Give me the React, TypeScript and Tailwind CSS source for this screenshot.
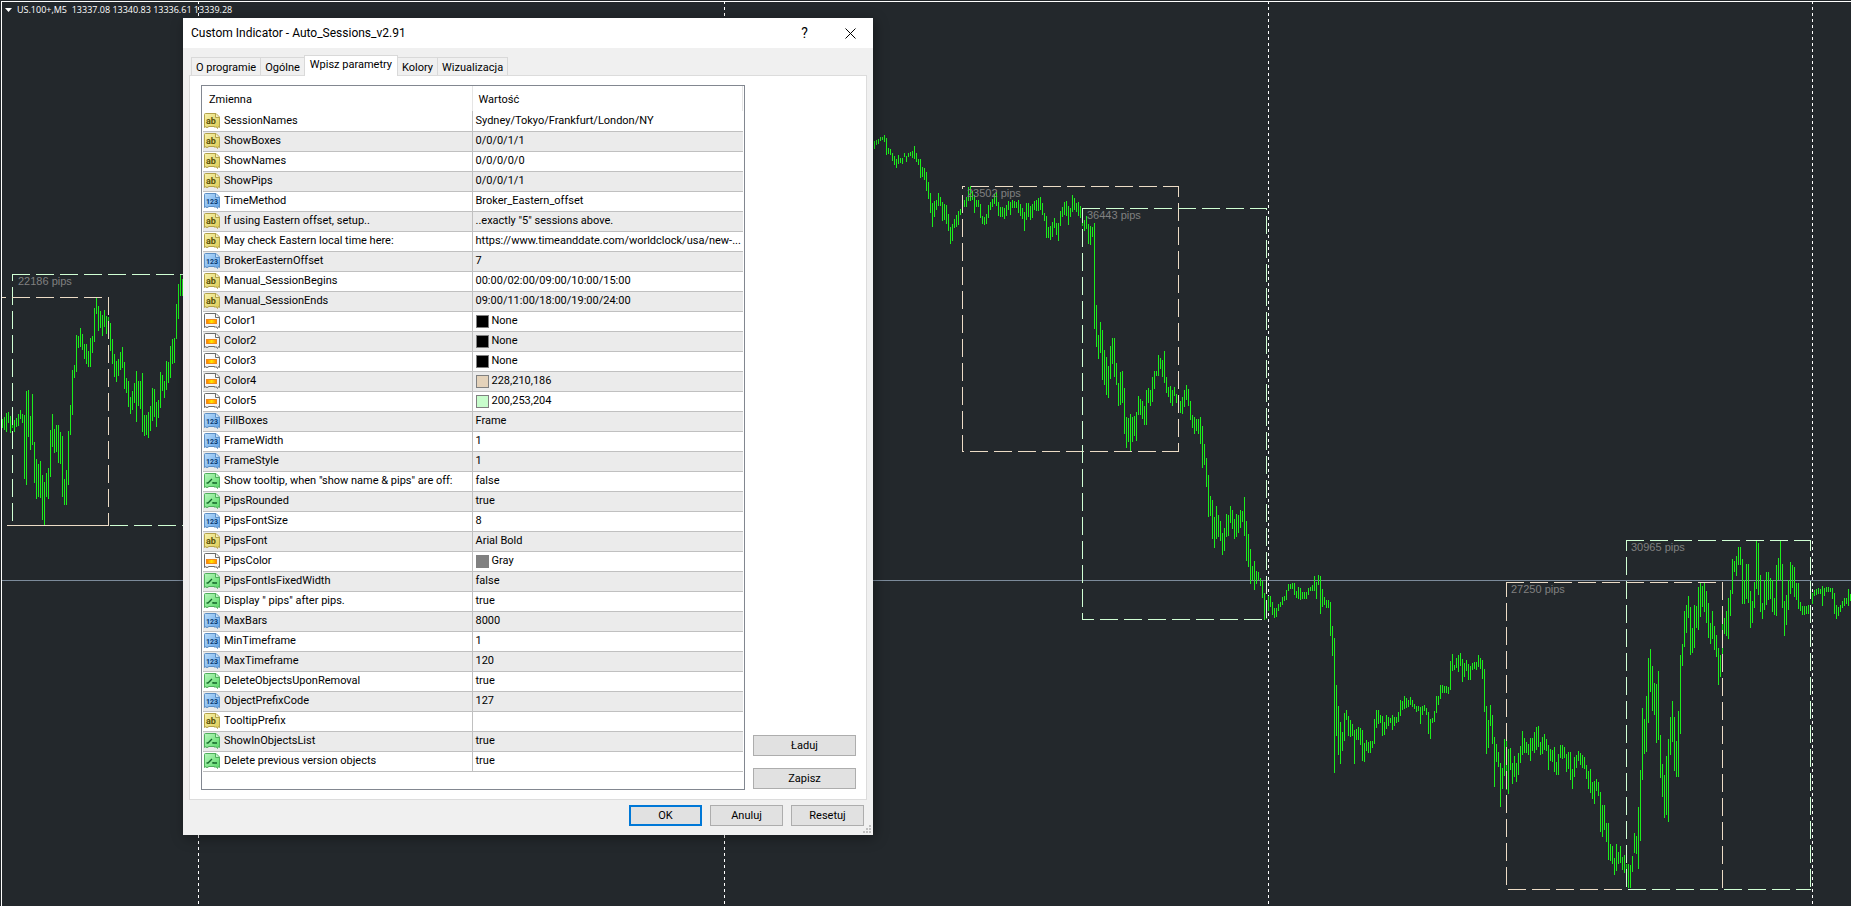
import { useState } from "react";

type IconKind = "text" | "number" | "color" | "bool";

const params: { kind: IconKind; name: string; value: string; swatch?: string }[] = [
  { kind: "text", name: "SessionNames", value: "Sydney/Tokyo/Frankfurt/London/NY" },
  { kind: "text", name: "ShowBoxes", value: "0/0/0/1/1" },
  { kind: "text", name: "ShowNames", value: "0/0/0/0/0" },
  { kind: "text", name: "ShowPips", value: "0/0/0/1/1" },
  { kind: "number", name: "TimeMethod", value: "Broker_Eastern_offset" },
  { kind: "text", name: "If using Eastern offset, setup..", value: '..exactly "5" sessions above.' },
  { kind: "text", name: "May check Eastern local time here:", value: "https://www.timeanddate.com/worldclock/usa/new-..." },
  { kind: "number", name: "BrokerEasternOffset", value: "7" },
  { kind: "text", name: "Manual_SessionBegins", value: "00:00/02:00/09:00/10:00/15:00" },
  { kind: "text", name: "Manual_SessionEnds", value: "09:00/11:00/18:00/19:00/24:00" },
  { kind: "color", name: "Color1", value: "None", swatch: "bg-black" },
  { kind: "color", name: "Color2", value: "None", swatch: "bg-black" },
  { kind: "color", name: "Color3", value: "None", swatch: "bg-black" },
  { kind: "color", name: "Color4", value: "228,210,186", swatch: "bg-[#e4d2ba]" },
  { kind: "color", name: "Color5", value: "200,253,204", swatch: "bg-[#c8fdcc]" },
  { kind: "number", name: "FillBoxes", value: "Frame" },
  { kind: "number", name: "FrameWidth", value: "1" },
  { kind: "number", name: "FrameStyle", value: "1" },
  { kind: "bool", name: 'Show tooltip, when "show name & pips" are off:', value: "false" },
  { kind: "bool", name: "PipsRounded", value: "true" },
  { kind: "number", name: "PipsFontSize", value: "8" },
  { kind: "text", name: "PipsFont", value: "Arial Bold" },
  { kind: "color", name: "PipsColor", value: "Gray", swatch: "bg-[#808080]" },
  { kind: "bool", name: "PipsFontIsFixedWidth", value: "false" },
  { kind: "bool", name: 'Display " pips" after pips.', value: "true" },
  { kind: "number", name: "MaxBars", value: "8000" },
  { kind: "number", name: "MinTimeframe", value: "1" },
  { kind: "number", name: "MaxTimeframe", value: "120" },
  { kind: "bool", name: "DeleteObjectsUponRemoval", value: "true" },
  { kind: "number", name: "ObjectPrefixCode", value: "127" },
  { kind: "text", name: "TooltipPrefix", value: "" },
  { kind: "bool", name: "ShowInObjectsList", value: "true" },
  { kind: "bool", name: "Delete previous version objects", value: "true" },
];

const tabs = ["O programie", "Ogólne", "Wpisz parametry", "Kolory", "Wizualizacja"];

// high-low of every bar, one bar each 2px
const series = [
  {
    start: 2,
    bars: "419-428 417-430 413-432 412-423 416-433 420-428 420-432 418-427 414-426 410-419 414-423 415-479 391-485 390-437 416-450 394-445 442-483 459-499 464-497 461-498 475-520 482-525 473-497 468-499 430-477 414-447 429-453 425-452 425-463 432-464 436-497 479-505 470-505 431-485 405-435 370-415 365-378 335-372 336-348 328-347 334-350 344-359 344-364 351-367 338-367 336-353 308-342 298-314 306-331 311-328 315-336 310-327 316-334 317-338 323-351 339-364 354-377 361-382 359-376 352-370 347-368 362-389 378-393 381-407 397-414 391-410 383-403 371-422 381-406 381-409 373-432 415-436 415-435 412-438 406-431 388-421 389-417 402-427 400-418 372-408 375-391 381-398 361-390 362-383 346-378 339-364 338-363 304-339 284-319 274-296 279-296",
  },
  {
    start: 874,
    bars: "141-149 140-145 139-144 137-141 137-140 135-142 138-155 148-154 149-155 153-161 156-165 159-168 155-164 158-163 158-164 153-157 156-162 153-157 152-156 151-158 146-159 153-162 159-165 159-178 167-177 168-180 172-191 182-199 193-213 203-227 201-217 200-210 193-206 197-206 202-221 204-220 205-224 214-231 227-244 224-241 219-228 215-227 211-225 209-215 209-213 200-207 197-207 187-201 186-201 191-200 195-213 200-207 200-207 204-218 216-224 217-225 214-224 205-218 202-210 199-207 194-204 192-206 202-216 207-217 207-217 208-219 205-216 201-210 202-215 200-208 201-208 202-208 200-213 204-216 208-219 212-231 203-220 203-217 206-220 204-218 201-210 200-211 198-211 197-210 203-215 213-221 216-238 227-238 226-240 222-237 218-228 223-235 223-241 211-226 207-217 202-215 201-216 206-225 208-217 195-212 198-210 203-212 202-216 206-218 208-226 220-231 216-229 224-244 226-245 227-237 223-329 305-347 335-359 322-353 330-380 350-385 357-395 366-398 346-379 338-364 338-377 363-385 383-406 372-405 371-403 388-434 417-448 418-442 414-451 417-442 416-436 412-441 396-415 399-415 401-419 406-425 390-425 388-403 390-406 377-402 371-389 371-376 355-376 358-369 360-377 351-383 377-393 387-397 386-403 390-406 387-396 394-403 396-406",
  },
  {
    start: 1180,
    bars: "401-413 397-414 390-407 385-400 389-406 401-420 415-428 417-434 419-431 419-434 417-444 426-468 444-465 458-487 475-517 496-516 500-539 517-548 506-539 515-537 521-541 533-555 528-551 514-537 515-536 506-523 510-529 519-539 514-537 515-533 510-528 511-522 497-536 521-561 534-567 549-584 566-580 561-590 571-584 572-580 578-586 581-598 593-620 600-619 596-611 596-607 602-615 608-618 608-617 604-611 602-607 597-605 596-601 590-600 584-591 584-589 583-589 583-595 591-598 587-599 588-600 592-599 592-599 592-599 588-595 587-591 585-591 576-591 582-599 575-585 576-614 589-607 597-605 600-608 600-608 602-636 626-656",
  },
  {
    start: 1334,
    bars: "638-773 685-736 706-755 722-764 732-751 713-741 710-720 716-736 720-737 724-736 730-764 729-740 727-740 728-745 730-761 743-762 740-751 742-753 741-753 741-748 719-744 710-728 710-724 715-723 716-736 722-735 715-729 717-726 718-723 715-730 717-726 717-723 712-722 700-716 701-710 696-709 698-708 700-707 697-705 700-707 704-709 706-712 706-711 707-724 706-715 705-711 708-715 712-734 719-739 718-723 711-722 696-713 696-705 685-699 685-693 686-693 686-693 687-694 661-690 654-671 665-670 658-668 655-672 653-666 659-682 663-677 660-671 664-680 666-680 663-670 662-669 662-670 655-667 658-669 660-679 669-712 706-754 720-748 705-726 715-744 737-787 744-762 752-767 763-807 768-789 739-776 741-790 749-794 748-770 763-784 756-777 763-782 753-775 746-763 731-755 738-753 742-753 744-755 738-761 738-751 732-753 727-750 726-747 742-755 737-754 734-750 739-751 745-770 749-761 750-762 747-772 762-775 754-775 745-758 745-759 747-758 754-772 752-769 752-780 769-789 757-777 755-768 751-761 753-765 755-768 757-769 765-779 771-789 769-793 782-799 781-804 779-791 782-796",
  },
  {
    start: 1600,
    bars: "792-832 805-837 805-830 823-842 823-860 844-861 846-864 858-875 844-871 852-864 846-863 857-870 855-873 864-887 864-888 865-888 856-872 833-853 836-854 807-869 770-841 708-780 719-754 696-752 658-723 649-692 666-711 683-715 684-743 671-740 735-778 764-797 775-818 756-815 739-822 717-755 701-742 717-771 741-777 711-777 655-734 644-666 611-647 605-633 596-618 607-655 628-653 605-648 606-628 587-630 583-617 586-607 583-612 591-623 603-638 623-644 611-639 626-650 635-657 648-685 655-677 624-672 618-634 611-636 598-639 590-616 559-594 561-572 556-576 547-565 547-565 559-604 580-604 564-599 564-603 591-628 601-623 582-608 541-589 543-595 575-612 603-619 580-610 572-605 572-600 578-599 580-612 598-615 565-616 558-580 541-580 564-608 601-636 595-625 580-610 562-594 565-588 567-597 583-600 583-609 602-611 606-615 606-615 606-614 605-614 606-615 593-604 590-596 589-595 588-594 589-594 586-606 588-596 587-592 587-592 588-592 588-599 593-614 605-619 607-616 605-612 601-608 598-606 598-604 589-606 594-601",
  },
];

const barsPath = series
  .map(({ start, bars }) =>
    bars
      .split(" ")
      .map((bar, i) => {
        const [high, low] = bar.split("-");
        return `M${start + i * 2 + 0.5} ${high}V${low}`;
      })
      .join("")
  )
  .join("");

const TAN = "#ecdcc6";
const MINT = "#d0ffd4";

// each side of a session frame has its own dash phase
const frameLines = [
  { d: "M12 274.5H183", color: MINT, offset: 0 },
  { d: "M12.5 274V525", color: MINT, offset: 11 },
  { d: "M110 525.5H183", color: MINT, offset: 0 },
  { d: "M2 297.5H108", color: TAN, offset: 14 },
  { d: "M108.5 297V526", color: TAN, offset: 0 },
  { d: "M962 186.5H1179", color: TAN, offset: 15 },
  { d: "M962.5 186V452", color: TAN, offset: 15 },
  { d: "M1178.5 186V452", color: TAN, offset: 7 },
  { d: "M962 451.5H1179", color: TAN, offset: 16 },
  { d: "M1082 208.5H1267", color: MINT, offset: 0 },
  { d: "M1082.5 208V619", color: MINT, offset: 3 },
  { d: "M1266.5 208V619", color: MINT, offset: 16 },
  { d: "M1082 619.5H1267", color: MINT, offset: 6 },
  { d: "M1506 582.5H1723", color: TAN, offset: 0 },
  { d: "M1506.5 582V889", color: TAN, offset: 3 },
  { d: "M1722.5 582V889", color: TAN, offset: 0 },
  { d: "M1506 889.5H1626", color: TAN, offset: 22 },
  { d: "M1626 540.5H1811", color: MINT, offset: 0 },
  { d: "M1626.5 540V889", color: MINT, offset: 7 },
  { d: "M1810.5 540V889", color: MINT, offset: 7 },
  { d: "M1626 889.5H1811", color: MINT, offset: 22 },
];

const pipLabels = [
  { x: 18, y: 285, text: "22186 pips" },
  { x: 967, y: 197, text: "23502 pips" },
  { x: 1087, y: 219, text: "36443 pips" },
  { x: 1511, y: 593, text: "27250 pips" },
  { x: 1631, y: 551, text: "30965 pips" },
];

function Chart() {
  return (
    <svg className="absolute inset-0 w-full h-full" shapeRendering="crispEdges" aria-hidden="true">
      {/* day separators */}
      <path d="M198.5 1V906M724.5 1V906M1268.5 1V906M1812.5 1V906" stroke="#fff" strokeDasharray="3 3" fill="none" />
      <path d="M2 580.5H1851" stroke="#7c8b9b" />
      <path d={barsPath} stroke="#1cee1c" fill="none" />
      <path d="M7 525.5H109" stroke={TAN} />
      {frameLines.map((line) => (
        <path key={line.d} d={line.d} stroke={line.color} strokeDasharray="18 6" strokeDashoffset={line.offset} />
      ))}
      {pipLabels.map((label) => (
        <text key={label.text} x={label.x} y={label.y} fill="#808080" className="text-[11px] font-['Liberation_Sans',sans-serif]">
          {label.text}
        </text>
      ))}
      {/* window edge */}
      <path d="M1 1.5H1851M1.5 1V906" stroke="#fff" />
    </svg>
  );
}

const iconColors = {
  text: { fill: "url(#icon-text)", edge: "#b3a24a" },
  number: { fill: "url(#icon-number)", edge: "#5d8fc4" },
  color: { fill: "url(#icon-color)", edge: "#6b6b6b" },
  bool: { fill: "url(#icon-bool)", edge: "#4fae5c" },
};

function IconDefs() {
  return (
    <svg className="absolute size-0" aria-hidden="true">
      <defs>
        <linearGradient id="icon-text" x1="0" y1="0" x2="1" y2="1">
          <stop offset="0" stopColor="#f7f2ae" />
          <stop offset="1" stopColor="#ddcb52" />
        </linearGradient>
        <linearGradient id="icon-number" x1="0" y1="0" x2="1" y2="1">
          <stop offset="0" stopColor="#b9dcfb" />
          <stop offset="1" stopColor="#62a3e6" />
        </linearGradient>
        <linearGradient id="icon-color" x1="0" y1="0" x2="1" y2="1">
          <stop offset="0" stopColor="#ffffff" />
          <stop offset="1" stopColor="#eeeeee" />
        </linearGradient>
        <linearGradient id="icon-bool" x1="0" y1="0" x2="1" y2="1">
          <stop offset="0" stopColor="#b9f7bd" />
          <stop offset="1" stopColor="#57d866" />
        </linearGradient>
        <linearGradient id="icon-bar">
          <stop offset="0" stopColor="#ff7a00" />
          <stop offset="0.5" stopColor="#ffe600" />
          <stop offset="1" stopColor="#ff8a00" />
        </linearGradient>
      </defs>
    </svg>
  );
}

function ParamIcon({ kind }: { kind: IconKind }) {
  const { fill, edge } = iconColors[kind];
  return (
    <svg width="16" height="16" viewBox="0 0 16 16" className="shrink-0" aria-hidden="true">
      <path
        d="M0.5 1.5Q0.5 0.5 1.5 0.5H12L15.5 4V14.5L14.5 13.5L13.5 15.5L12 13.5L11 14.5L10 13L9 14L8 13L7 14L6 13L5 14L4 13.5L3 15L2 13.5L0.5 14.5Z"
        fill={fill}
        stroke={edge}
      />
      <path d="M11.5 0.5V4.5H15.5" fill="#ffffff80" stroke={edge} />
      {kind === "text" && (
        <text x="2" y="11" fill="#5b5208" className="text-[9px] font-bold font-['Roboto',sans-serif]">ab</text>
      )}
      {kind === "number" && (
        <text x="2" y="11" fill="#0b3d73" className="text-[7px] font-bold font-['Roboto',sans-serif]">123</text>
      )}
      {kind === "color" && <rect x="2.5" y="6.5" width="10" height="4" fill="url(#icon-bar)" stroke="#f08a1c" />}
      {kind === "bool" && <path d="M2.5 10H4L8 6M9 9V10H13" fill="none" stroke="#14682a" strokeWidth="1.3" />}
    </svg>
  );
}

const buttonClass = "h-[21px] bg-[#e1e1e1] border border-[#adadad] text-center leading-[19px] hover:bg-[#e5f1fb] hover:border-[#0078d7]";

export default function App() {
  const [activeTab, setActiveTab] = useState("Wpisz parametry");

  return (
    <main className="relative min-h-screen overflow-hidden bg-[#23282c] font-['Roboto',sans-serif] text-[11px] text-black">
      <Chart />
      <IconDefs />

      <div className="relative flex items-center px-1 pt-px h-[18px] text-white font-['Open_Sans',sans-serif] text-[9px]">
        <svg width="9" height="6" viewBox="0 0 9 6" aria-hidden="true">
          <path d="M1 1H8L4.5 5Z" fill="#fff" />
        </svg>
        <span className="pl-1 whitespace-pre">US.100+,M5  13337.08 13340.83 13336.61 13339.28</span>
      </div>

      <section role="dialog" aria-labelledby="dialog-title" className="absolute left-[183px] top-[18px] w-[690px] bg-[#f0f0f0] shadow-[2px_3px_12px_rgba(0,0,0,0.35)]">
        <header className="flex items-center h-[30px] pl-2 bg-white text-[12px]">
          <h1 id="dialog-title" className="grow">Custom Indicator - Auto_Sessions_v2.91</h1>
          <button type="button" aria-label="Pomoc" className="w-[45px] h-full text-[14px]">?</button>
          <button type="button" aria-label="Zamknij" className="flex items-center justify-center w-[46px] h-full">
            <svg width="11" height="11" viewBox="0 0 11 11" aria-hidden="true">
              <path d="M0.5 0.5L10.5 10.5M10.5 0.5L0.5 10.5" stroke="#000" />
            </svg>
          </button>
        </header>

        <div role="tablist" className="flex items-end h-[27px] px-2">
          {tabs.map((tab) => (
            <button
              key={tab}
              type="button"
              role="tab"
              aria-selected={tab === activeTab}
              onClick={() => setActiveTab(tab)}
              className={
                tab === activeTab
                  ? "relative z-10 h-[21px] -mb-px -ml-px px-[5px] pb-0.5 bg-white border border-b-0 border-[#d9d9d9]"
                  : "h-[18px] px-1 pt-0.5 bg-[#f0f0f0] border border-b-0 border-l-0 first:border-l border-[#d9d9d9]"
              }
            >
              {tab}
            </button>
          ))}
        </div>

        <div className="flex gap-2 mx-[6px] p-[9px] pl-[11px] bg-white border border-[#dcdcdc]">
          <div className="w-[544px] px-px pb-[17px] bg-white border border-[#828790]">
            <table className="w-full table-fixed border-collapse text-left">
              <colgroup>
                <col className="w-[269px]" />
                <col />
              </colgroup>
              <thead>
                <tr className="h-[25px]">
                  <th className="pl-[6px] pt-1 font-normal border-r border-[#e5e5e5]">Zmienna</th>
                  <th className="pl-[6px] pt-1 font-normal border-r border-[#e5e5e5]">Wartość</th>
                </tr>
              </thead>
              <tbody>
                {params.map((param) => (
                  <tr key={param.name} className="h-[20px] even:bg-[#ebebeb] border-b border-[#c0c0c0]">
                    <td className="p-0 border-r border-[#c0c0c0]">
                      <div className="flex items-center gap-1 pl-px whitespace-nowrap">
                        <ParamIcon kind={param.kind} />
                        <span className="pt-px">{param.name}</span>
                      </div>
                    </td>
                    <td className="p-0">
                      <div className="flex items-center gap-[3px] pl-[3px] whitespace-nowrap">
                        {param.swatch && <span className={`size-[13px] border border-[#808080] ${param.swatch}`} />}
                        <span className="pt-px">{param.value}</span>
                      </div>
                    </td>
                  </tr>
                ))}
              </tbody>
            </table>
          </div>
          <div className="flex flex-col justify-end gap-3 w-[103px] pb-px">
            <button type="button" className={buttonClass}>Ładuj</button>
            <button type="button" className={buttonClass}>Zapisz</button>
          </div>
        </div>

        <footer className="flex justify-end gap-2 pt-[5px] pr-[9px] h-[35px]">
          <button type="button" className="w-[73px] h-[21px] bg-[#e1e1e1] border-2 border-[#0078d7] text-center leading-[17px]">OK</button>
          <button type="button" className={`w-[73px] ${buttonClass}`}>Anuluj</button>
          <button type="button" className={`w-[73px] ${buttonClass}`}>Resetuj</button>
        </footer>
        {/* resize grip */}
        <svg width="8" height="8" viewBox="0 0 8 8" className="absolute right-[2px] bottom-[2px]" aria-hidden="true">
          <path d="M6 0h2v2h-2zM3 3h2v2h-2zM6 3h2v2h-2zM0 6h2v2h-2zM3 6h2v2h-2zM6 6h2v2h-2z" fill="#bfbfbf" />
        </svg>
      </section>
    </main>
  );
}
